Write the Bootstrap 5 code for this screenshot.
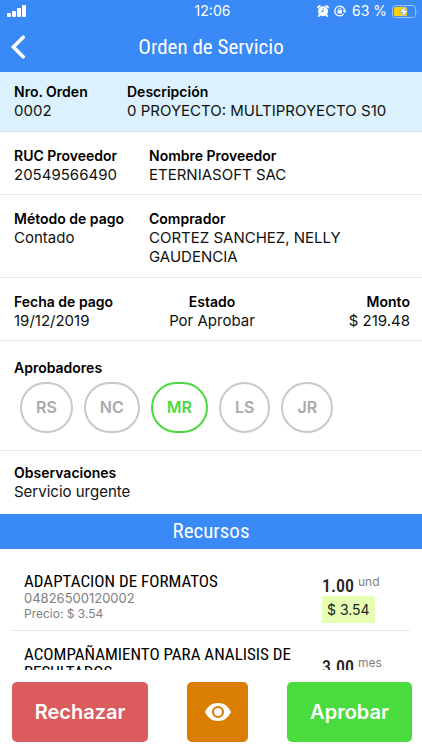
<!DOCTYPE html>
<html lang="es">
<head>
<meta charset="utf-8">
<meta name="viewport" content="width=device-width, initial-scale=1">
<title>Orden de Servicio</title>
<link href="https://cdn.jsdelivr.net/npm/bootstrap@5.3.0/dist/css/bootstrap.min.css" rel="stylesheet">
<style>
body { font-family: Inter, "Liberation Sans", sans-serif; color: #111; font-size: 15px; line-height: 19px; background: #fff; }
.blue { background: #3989f6; color: #fff; }
.narrow { font-family: "Roboto Condensed", "Liberation Sans Narrow", Roboto, sans-serif; font-weight: 400; }
.status { height: 22px; font-size: 14px; line-height: 22px; padding: 0 4px 0 7px; }
.status > * { flex: 1 1 0; }
.indicators { gap: 5px; }
.titlebar { height: 50px; padding: 0 10px; }
.titlebar h1, .section-title { font-size: 21px; line-height: 35px; }
.side { width: 24px; }
.back { color: #fff; line-height: 0; }
.content { min-height: 0; scrollbar-width: none; }
.info { padding: 15px 12px 10px 14px; border-bottom: 1px solid #e9e9ea; margin: 0; }
.info.order { background: #dbf2fe; padding: 11px 12px 11px 14px; border-color: #cfe6f3; }
.info.buyer { padding-bottom: 11px; }
.info.approvers { padding: 18px 12px 17px 14px; }
.info.notes { padding: 13px 12px 13px 14px; border: 0; }
.info dt { font-size: 14px; line-height: 18px; font-weight: 600; color: #000; }
.info dd { margin: 0; }
.key-sm { width: 113px; }
.key-lg { width: 135px; }
.chips { gap: 11px; padding: 5px 6px 0; }
.chip { height: 51px; min-width: 51px; padding: 0 14px; border: 2px solid #c9c9c9; border-radius: 26px; color: #a9a9a9; font-size: 16px; font-weight: 600; background: #fff; }
.chip.current { border-color: #4bd93f; color: #4bd93f; }
.resources { padding: 0 12px; }
.resource { padding: 23px 0 7px 12px; border-bottom: 1px solid #e9e9ea; }
.resource + .resource { padding-top: 14px; }
.resource h3 { font-size: 17px; line-height: 18px; margin: 0 0 1px; color: #000; }
.code { font-size: 13px; line-height: 15px; color: #808080; }
.price { font-size: 12px; line-height: 15px; color: #808080; }
.qty-col { width: 88px; padding-top: 4px; }
.resource + .resource .qty-col { padding-top: 12px; }
.qty { font-size: 18px; line-height: 20px; font-weight: 500; color: #222; }
.unit { font-size: 12px; line-height: 12px; color: #808080; }
.amount { background: #e6ffb3; font-size: 14px; line-height: 27px; padding: 0 5px; color: #222; }
.actions { padding: 12px 10px 8px 12px; }
.actions .btn { height: 60px; border: 0; border-radius: 5px; color: #fff; font-size: 20px; font-weight: 600; }
.reject, .reject:hover { background: #dc5c5e !important; width: 136px; }
.view, .view:hover { background: #da7e02 !important; width: 61px; }
.approve, .approve:hover { background: #4adc3e !important; width: 125px; }
</style>
<script src="https://cdn.jsdelivr.net/npm/bootstrap@5.3.0/dist/js/bootstrap.bundle.min.js"></script>
</head>
<body>
<div class="d-flex flex-column vh-100">
  <header class="blue">
    <div class="status d-flex align-items-center">
      <div class="d-flex">
        <svg width="20" height="12" viewBox="0 0 20 12" fill="#fff" aria-hidden="true"><rect y="8" width="4" height="4" rx="1"/><rect x="5" y="6" width="4" height="6" rx="1"/><rect x="10" y="3" width="4" height="9" rx="1"/><rect x="15" width="4" height="12" rx="1"/></svg>
      </div>
      <div class="text-center">12:06</div>
      <div class="indicators d-flex justify-content-end align-items-center text-nowrap">
        <svg class="flex-shrink-0" width="12" height="12" viewBox="0 0 12 12" aria-hidden="true"><circle cx="6" cy="6.300" r="5" fill="#fff"/><path d="M1 2.400 2.600 1M11 2.400 9.400 1M2.600 10 1.800 11M9.400 10l.8 1" stroke="#fff" stroke-width="1.900" stroke-linecap="round"/><path d="M6.200 3.400v3H3.900" fill="none" stroke="#3989f6" stroke-width=".9"/></svg>
        <svg class="flex-shrink-0" width="13" height="12" viewBox="0 0 13 12" aria-hidden="true"><path d="M9.700 8.900A4.900 4.900 0 1 1 10.600 5.500" fill="none" stroke="#fff" stroke-width="1.300"/><path d="M8.600 5.400H12.600L10.600 8z" fill="#fff"/><rect x="3.500" y="5.200" width="4.400" height="3.200" rx=".4" fill="#fff"/><path d="M4.500 5.500V4.500a1.200 1.200 0 0 1 2.400 0v1" fill="none" stroke="#fff" stroke-width=".9"/></svg>
        <span>63 %</span>
        <svg class="flex-shrink-0" width="26" height="13" viewBox="0 0 26 13" aria-hidden="true"><rect x=".5" y=".5" width="23" height="12" rx="3" fill="none" stroke="#9dc4fb"/><path d="M24.600 4.500q1.400 2 0 4z" fill="#9dc4fb"/><rect x="2" y="2" width="13" height="9" rx="1.500" fill="#fdd20a"/><path d="M13.800.8 7.500 7.300H11l-1.500 5L16.300 5.500h-3.700z" fill="#fff" stroke="#3989f6" stroke-width=".5"/></svg>
      </div>
    </div>
    <nav class="titlebar d-flex align-items-center justify-content-between" aria-label="Principal">
      <a class="back side" href="#" aria-label="Volver"><svg width="16" height="24" viewBox="0 0 16 24" fill="none" stroke="#fff" stroke-width="3.600" stroke-linecap="round" stroke-linejoin="miter"><path d="M13.200 2.200 3.400 12l9.800 9.800"/></svg></a>
      <h1 class="narrow m-0">Orden de Servicio</h1>
      <span class="side"></span>
    </nav>
  </header>

  <main class="content flex-grow-1 overflow-auto">
    <dl class="info order d-flex">
      <div class="key-sm"><dt>Nro. Orden</dt><dd>0002</dd></div>
      <div class="flex-fill"><dt>Descripción</dt><dd>0 PROYECTO: MULTIPROYECTO S10</dd></div>
    </dl>
    <dl class="info d-flex">
      <div class="key-lg"><dt>RUC Proveedor</dt><dd>20549566490</dd></div>
      <div><dt>Nombre Proveedor</dt><dd>ETERNIASOFT SAC</dd></div>
    </dl>
    <dl class="info buyer d-flex">
      <div class="key-lg"><dt>Método de pago</dt><dd>Contado</dd></div>
      <div class="col-7"><dt>Comprador</dt><dd>CORTEZ SANCHEZ, NELLY GAUDENCIA</dd></div>
    </dl>
    <dl class="info d-flex">
      <div class="col-4"><dt>Fecha de pago</dt><dd>19/12/2019</dd></div>
      <div class="col-4 text-center"><dt>Estado</dt><dd>Por Aprobar</dd></div>
      <div class="col-4 text-end"><dt>Monto</dt><dd>$ 219.48</dd></div>
    </dl>
    <dl class="info approvers">
      <dt>Aprobadores</dt>
      <dd class="chips d-flex">
        <button type="button" class="chip">RS</button>
        <button type="button" class="chip">NC</button>
        <button type="button" class="chip current">MR</button>
        <button type="button" class="chip">LS</button>
        <button type="button" class="chip">JR</button>
      </dd>
    </dl>
    <dl class="info notes"><dt>Observaciones</dt><dd>Servicio urgente</dd></dl>

    <h2 class="section-title narrow blue text-center m-0">Recursos</h2>
    <ul class="resources list-unstyled m-0">
      <li class="resource d-flex justify-content-between">
        <div class="col-9">
          <h3 class="narrow">ADAPTACION DE FORMATOS</h3>
          <div class="code">04826500120002</div>
          <div class="price">Precio: $ 3.54</div>
        </div>
        <div class="qty-col">
          <div class="d-flex"><span class="qty narrow">1.00</span><span class="unit ms-1">und</span></div>
          <span class="amount d-inline-block">$ 3.54</span>
        </div>
      </li>
      <li class="resource d-flex justify-content-between">
        <div class="col-9">
          <h3 class="narrow">ACOMPAÑAMIENTO PARA ANALISIS DE RESULTADOS</h3>
        </div>
        <div class="qty-col">
          <div class="d-flex"><span class="qty narrow">3.00</span><span class="unit ms-1">mes</span></div>
        </div>
      </li>
    </ul>
  </main>

  <footer class="actions d-flex justify-content-between bg-white">
    <button type="button" class="btn reject">Rechazar</button>
    <button type="button" class="btn view p-0" aria-label="Ver"><svg class="d-block mx-auto" width="26" height="18" viewBox="0 0 26 18" aria-hidden="true"><path d="M0 9C2.500 3.300 7.200 0 13 0s10.500 3.300 13 9c-2.500 5.700-7.200 9-13 9S2.500 14.700 0 9z" fill="#fff"/><circle cx="13" cy="9" r="5" fill="none" stroke="#da7e02" stroke-width="2.200"/></svg></button>
    <button type="button" class="btn approve">Aprobar</button>
  </footer>
</div>
</body>
</html>
